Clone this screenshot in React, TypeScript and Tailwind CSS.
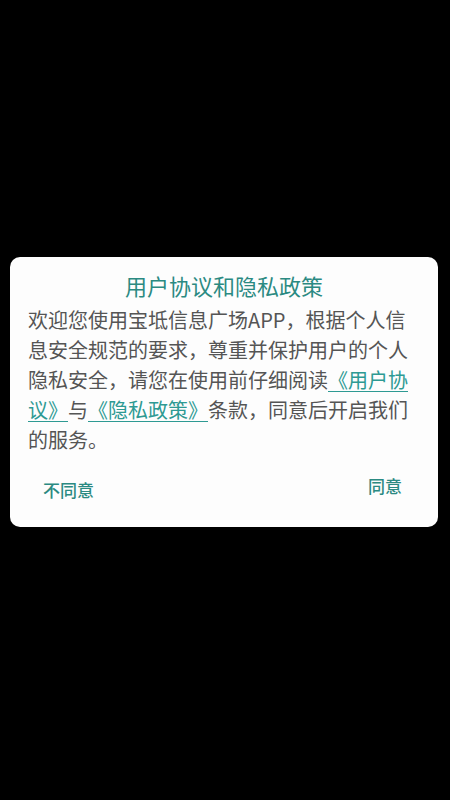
export default function App() {
  const font = { fontFamily: '"Noto Sans CJK SC", "Noto Sans", sans-serif' };
  return (
    <div className="h-[800px] w-[450px] bg-black pt-[257px] pl-[10px]" style={font}>
      <div className="w-[428px] h-[270px] bg-[#fdfdfd] rounded-[10px] flex flex-col">
        <div className="pt-[13px] text-center text-[22px] leading-[30px] text-[#2b8a82]">
          用户协议和隐私政策
        </div>
        <div className="mt-[5px] pl-[18px] w-[410px] text-[20px] leading-[30px] text-[#555555] whitespace-nowrap">
          欢迎您使用宝坻信息广场APP，根据个人信
          <br />
          息安全规范的要求，尊重并保护用户的个人
          <br />
          隐私安全，请您在使用前仔细阅读
          <span className="text-[#2e9a93] underline underline-offset-[3px] decoration-1">《用户协</span>
          <br />
          <span className="text-[#2e9a93] underline underline-offset-[3px] decoration-1">议》</span>
          与
          <span className="text-[#2e9a93] underline underline-offset-[3px] decoration-1">《隐私政策》</span>
          条款，同意后开启我们
          <br />
          的服务。
        </div>
        <div className="mt-[23px] flex justify-between pl-[33px] pr-[36px] text-[17px] leading-[24px] font-medium text-[#2b8a82]">
          <span>不同意</span>
          <span className="-mt-[4px]">同意</span>
        </div>
      </div>
    </div>
  );
}
